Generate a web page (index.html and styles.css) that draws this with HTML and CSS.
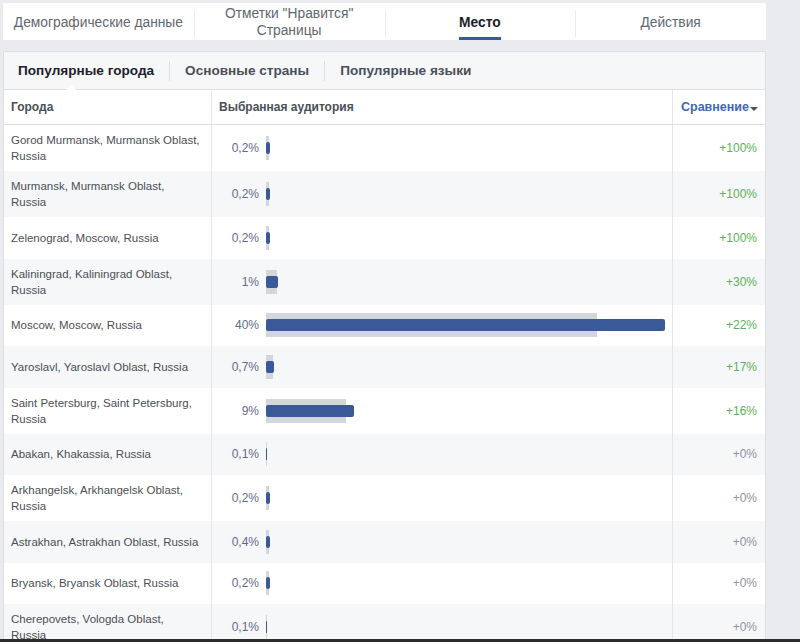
FILE: index.html
```html
<!DOCTYPE html>
<html lang="ru">
<head>
<meta charset="utf-8">
<title>Аудитория — Место</title>
<link rel="stylesheet" href="styles.css">
</head>
<body>
<div class="page">
  <nav class="tabs">
    <div class="tab">Демографические данные</div>
    <div class="tab sep">Отметки "Нравится"<br>Страницы</div>
    <div class="tab sep active"><span class="label">Место</span></div>
    <div class="tab sep">Действия</div>
  </nav>

  <section class="card">
    <div class="subtabs">
      <div class="subtab current">Популярные города</div>
      <div class="subtab">Основные страны</div>
      <div class="subtab">Популярные языки</div>
    </div>

    <div class="thead">
      <div class="th">Города</div>
      <div class="th col2">Выбранная аудитория</div>
      <div class="th col3 compare">Сравнение<span class="caret"></span></div>
    </div>

    <div class="rows">
      <div class="row">
        <div class="city">Gorod Murmansk, Murmansk Oblast,<br>Russia</div>
        <div class="aud"><span class="pct">0,2%</span><span class="bar"><span class="track" style="width:3px"></span><span class="fill" style="width:4px"></span></span></div>
        <div class="cmp up">+100%</div>
      </div>
      <div class="row">
        <div class="city">Murmansk, Murmansk Oblast,<br>Russia</div>
        <div class="aud"><span class="pct">0,2%</span><span class="bar"><span class="track" style="width:3px"></span><span class="fill" style="width:4px"></span></span></div>
        <div class="cmp up">+100%</div>
      </div>
      <div class="row">
        <div class="city">Zelenograd, Moscow, Russia</div>
        <div class="aud"><span class="pct">0,2%</span><span class="bar"><span class="track" style="width:3px"></span><span class="fill" style="width:4px"></span></span></div>
        <div class="cmp up">+100%</div>
      </div>
      <div class="row">
        <div class="city">Kaliningrad, Kaliningrad Oblast,<br>Russia</div>
        <div class="aud"><span class="pct">1%</span><span class="bar"><span class="track" style="width:11px"></span><span class="fill" style="width:12px"></span></span></div>
        <div class="cmp up">+30%</div>
      </div>
      <div class="row">
        <div class="city">Moscow, Moscow, Russia</div>
        <div class="aud"><span class="pct">40%</span><span class="bar"><span class="track" style="width:331px"></span><span class="fill" style="width:399px"></span></span></div>
        <div class="cmp up">+22%</div>
      </div>
      <div class="row">
        <div class="city">Yaroslavl, Yaroslavl Oblast, Russia</div>
        <div class="aud"><span class="pct">0,7%</span><span class="bar"><span class="track" style="width:7px"></span><span class="fill" style="width:8px"></span></span></div>
        <div class="cmp up">+17%</div>
      </div>
      <div class="row">
        <div class="city">Saint Petersburg, Saint Petersburg,<br>Russia</div>
        <div class="aud"><span class="pct">9%</span><span class="bar"><span class="track" style="width:80px"></span><span class="fill" style="width:88px"></span></span></div>
        <div class="cmp up">+16%</div>
      </div>
      <div class="row">
        <div class="city">Abakan, Khakassia, Russia</div>
        <div class="aud"><span class="pct">0,1%</span><span class="bar"><span class="track" style="width:1px"></span><span class="fill" style="width:1px"></span></span></div>
        <div class="cmp">+0%</div>
      </div>
      <div class="row">
        <div class="city">Arkhangelsk, Arkhangelsk Oblast,<br>Russia</div>
        <div class="aud"><span class="pct">0,2%</span><span class="bar"><span class="track" style="width:3px"></span><span class="fill" style="width:4px"></span></span></div>
        <div class="cmp">+0%</div>
      </div>
      <div class="row">
        <div class="city">Astrakhan, Astrakhan Oblast, Russia</div>
        <div class="aud"><span class="pct">0,4%</span><span class="bar"><span class="track" style="width:3px"></span><span class="fill" style="width:4px"></span></span></div>
        <div class="cmp">+0%</div>
      </div>
      <div class="row">
        <div class="city">Bryansk, Bryansk Oblast, Russia</div>
        <div class="aud"><span class="pct">0,2%</span><span class="bar"><span class="track" style="width:3px"></span><span class="fill" style="width:4px"></span></span></div>
        <div class="cmp">+0%</div>
      </div>
      <div class="row">
        <div class="city">Cherepovets, Vologda Oblast,<br>Russia</div>
        <div class="aud"><span class="pct">0,1%</span><span class="bar"><span class="track" style="width:1px"></span><span class="fill" style="width:1px"></span></span></div>
        <div class="cmp">+0%</div>
      </div>
    </div>
  </section>
</div>
<div class="taskbar"></div>
</body>
</html>
```

FILE: styles.css
```css
* { box-sizing: border-box; }

body {
  margin: 0;
  background: #e9ebee;
  font-family: "Liberation Sans", Arial, sans-serif;
  color: #4b4f56;
}

.page {
  width: 763px;
  margin-left: 3px;
  padding-top: 3px;
}

/* top tabs */
.tabs {
  display: grid;
  grid-template-columns: repeat(4, 1fr);
  height: 37px;
  background: #fff;
}

.tab {
  display: flex;
  align-items: center;
  justify-content: center;
  text-align: center;
  font-size: 13.8px;
  line-height: 17px;
  color: #606770;
  padding-top: 1px;
}

.tab.sep {
  background: linear-gradient(#e9ebee, #e9ebee) no-repeat left 0 top 7px / 1px 27px;
}

.tab.active {
  align-items: flex-end;
}

.tab.active .label {
  font-weight: bold;
  color: #1d2129;
  padding-bottom: 6px;
  border-bottom: 3px solid #3b5998;
}

/* card */
.card {
  margin-top: 11px;
  background: #fff;
  border: 1px solid #dddfe2;
  border-bottom: 0;
}

.subtabs {
  display: flex;
  align-items: center;
  height: 38px;
  background: #f6f7f9;
  border-bottom: 1px solid #dddfe2;
}

.subtab {
  padding: 0 15px;
  line-height: 20px;
  font-size: 13.6px;
  font-weight: bold;
  color: #4b4f56;
}

.subtab:first-child { padding-left: 14px; }

.subtab + .subtab { border-left: 1px solid #dddfe2; }

.subtab.current {
  color: #1d2129;
  position: relative;
}

.subtab.current::after {
  content: "";
  position: absolute;
  left: 61px;
  bottom: -10px;
  border-left: 6px solid transparent;
  border-right: 6px solid transparent;
  border-bottom: 6px solid #fff;
}

/* table */
.thead,
.row {
  display: grid;
  grid-template-columns: 207px 461px 93px;
}

.thead {
  height: 35px;
  border-bottom: 1px solid #dddfe2;
}

.th {
  display: flex;
  align-items: center;
  padding: 0 7px;
  font-size: 12px;
  font-weight: bold;
  color: #4b4f56;
}

.col2,
.col3 { border-left: 1px solid #e5e6e9; }

.col2 { padding-left: 7px; }

.compare {
  color: #4267b2;
  padding-left: 8px;
  font-size: 12.5px;
}

.caret {
  display: inline-block;
  margin-left: 1px;
  margin-top: 3px;
  border-left: 4px solid transparent;
  border-right: 4px solid transparent;
  border-top: 4px solid #4b4f56;
}

.row {
  min-height: 41.5px;
}

.row:nth-child(even) { background: #f6f7f9; }

.city {
  display: flex;
  align-items: center;
  padding: 7px 7px;
  font-size: 11.5px;
  line-height: 16px;
  white-space: nowrap;
  color: #4b4f56;
}

.aud {
  display: flex;
  align-items: center;
  gap: 7px;
  border-left: 1px solid #e5e6e9;
}

.pct {
  width: 47px;
  text-align: right;
  font-size: 12px;
  color: #5f6b8c;
}

.bar {
  display: grid;
  align-items: center;
  justify-items: start;
}

.track,
.fill { grid-area: 1 / 1; }

.track {
  height: 24px;
  background: #d3d6db;
}

.fill {
  height: 12px;
  background: #3b5998;
  border-radius: 2px;
}

.cmp {
  display: flex;
  align-items: center;
  justify-content: flex-end;
  padding-right: 8px;
  border-left: 1px solid #e5e6e9;
  font-size: 12px;
  color: #90949c;
}

.cmp.up { color: #5cb257; }

.taskbar {
  position: fixed;
  left: 0;
  right: 0;
  bottom: 0;
  height: 3px;
  background: #2d2d2d;
}
```
